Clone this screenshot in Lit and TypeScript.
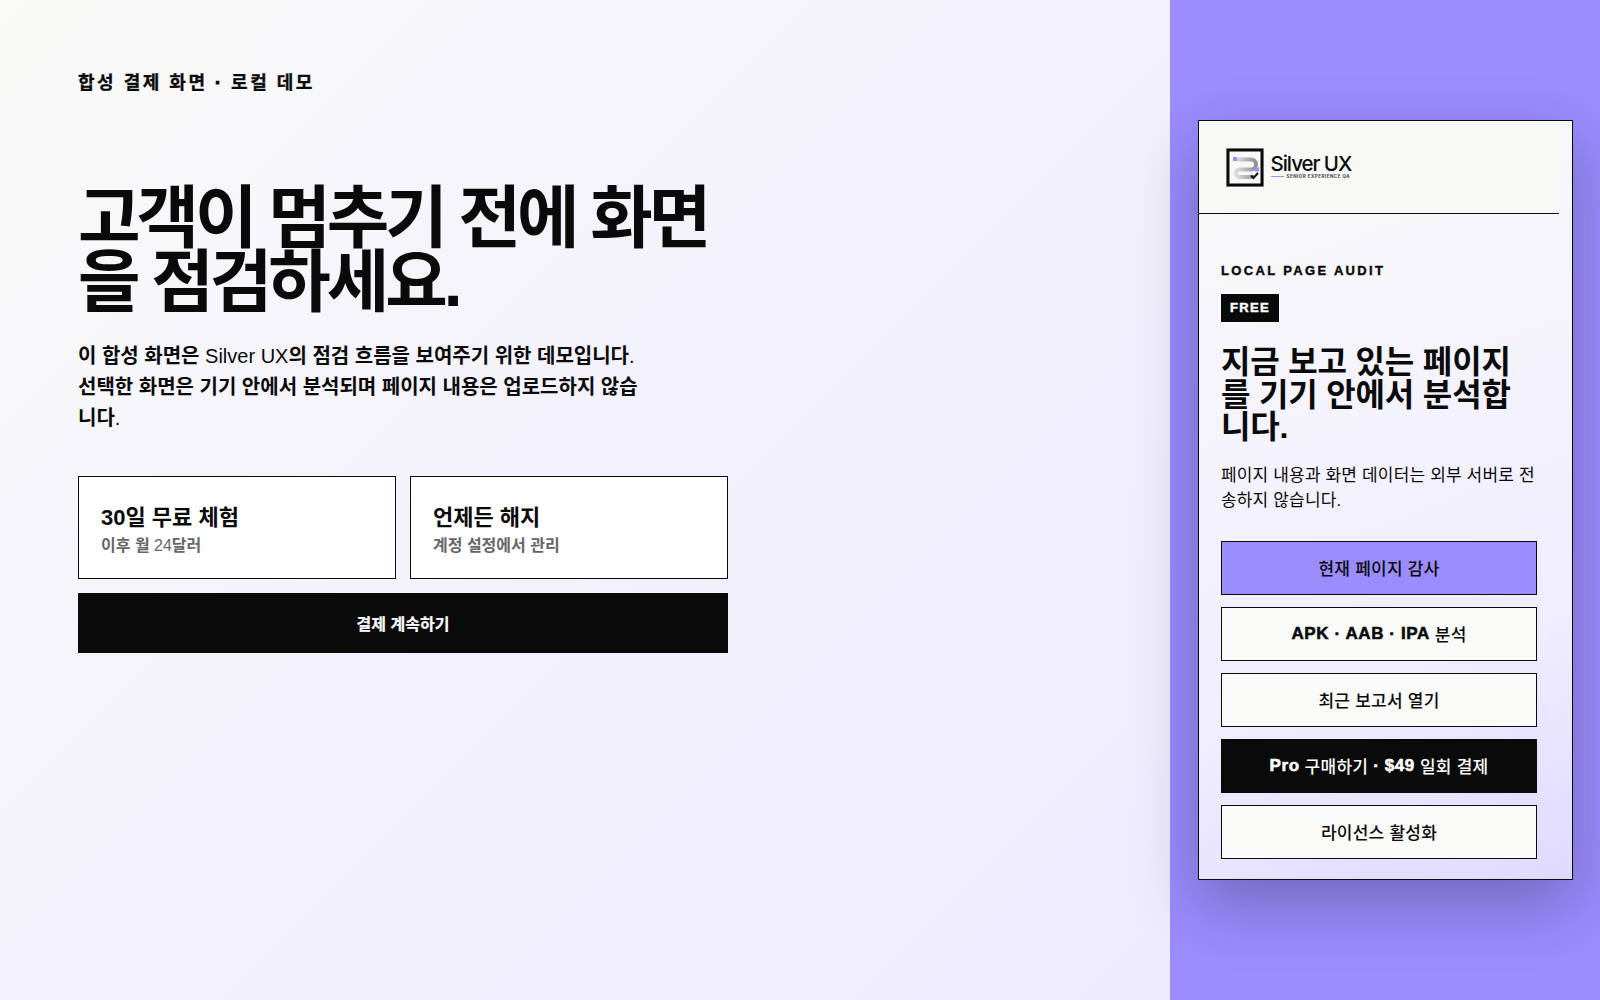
import { LitElement, html, css } from "lit";
import { customElement } from "lit/decorators.js";

@customElement("app-root")
export class AppRoot extends LitElement {
  static styles = css`
    :host { display: block; width: 1600px; height: 1000px; overflow: hidden; font-family: "Liberation Sans", "Noto Sans CJK KR", sans-serif; color: #0a0a0a; }
    * { box-sizing: border-box; }
    .page { display: grid; grid-template-columns: 1fr 430px; height: 1000px; }
    .left { padding: 71px 0 0 78px; background: linear-gradient(135deg, #fafaf8 0%, #f3f1fc 50%, #eeebff 100%); }
    .eyebrow { margin: 0; font-size: 18px; line-height: 24px; font-weight: 700; letter-spacing: 0.14em; -webkit-text-stroke: 0.3px #0a0a0a; }
    .eyebrow .dot { -webkit-text-stroke: 1px #0a0a0a; }
    h1 { margin: 91px 0 0; width: 650px; font-size: 68px; line-height: 64px; font-weight: 700; letter-spacing: -0.06em; }
    .lead { margin: 26.5px 0 0; width: 570px; font-size: 20px; line-height: 31px; font-weight: 700; }
    .lead .lat { font-weight: 400; }
    .cards { display: grid; grid-template-columns: 1fr 1fr; gap: 14px; width: 650px; margin-top: 42.5px; }
    .card { height: 103px; padding: 27px 22px; background: #fff; border: 1px solid #0a0a0a; }
    .card b { display: block; font-size: 22px; line-height: 28px; margin-bottom: 3px; }
    .card span { display: block; font-size: 16px; line-height: 22px; font-weight: 700; color: #666; }
    .card span .lat { display: inline; font-weight: 400; }
    .cta { display: flex; align-items: center; justify-content: center; width: 650px; height: 60px; margin-top: 14px; background: #0a0a0a; color: #fff; font-size: 16px; font-weight: 700; -webkit-text-stroke: 0.2px #fff; }
    .right { background: #9b8cff; padding: 120px 0 0 28px; }
    .panel { width: 375px; padding-right: 13px; border: 1px solid #0a0a0a; background: linear-gradient(160deg, #fafaf8 0%, #f0edff 70%, #e0d9ff 100%); box-shadow: 0 24px 60px rgba(10,10,10,.28); letter-spacing: 0.01em; }
    .head { display: flex; align-items: center; gap: 7px; height: 93px; padding: 0 0 0 26.5px; background: #f8f8f6; border-bottom: 1px solid #0a0a0a; font-family: Inter, "Liberation Sans", sans-serif; }
    .logo { display: block; flex: none; }
    .brand { display: flex; flex-direction: column; margin-top: -1px; }
    .name { font-size: 20.5px; line-height: 20px; font-weight: 500; letter-spacing: -0.05em; }
    .sub { display: flex; align-items: center; gap: 3px; font-size: 4.5px; line-height: 6px; font-weight: 700; letter-spacing: 0.11em; color: #444; }
    .sub i { display: block; width: 13px; height: 1.5px; background: #9b8cff; }
    .body { padding: 47px 22px 20px; }
    .kicker { margin: 0; font-size: 13px; line-height: 20px; font-weight: 700; letter-spacing: 0.18em; -webkit-text-stroke: 0.4px #0a0a0a; }
    .free { display: block; width: fit-content; margin-top: 13px; padding: 0 9px; height: 28px; line-height: 28px; background: #0a0a0a; color: #fff; font-size: 13px; font-weight: 700; letter-spacing: 0.1em; -webkit-text-stroke: 0.5px #fff; }
    h2 { margin: 24px 0 0; font-size: 32px; line-height: 32.64px; font-weight: 700; letter-spacing: -0.005em; }
    .desc { margin: 19px 0 0; font-size: 17px; line-height: 25.5px; }
    .actions { display: flex; flex-direction: column; gap: 12px; margin-top: 27px; }
    .btn { display: flex; align-items: center; justify-content: center; height: 54px; background: #fafaf8; border: 1px solid #0a0a0a; font-size: 17px; font-weight: 500; white-space: pre; letter-spacing: 0.015em; }
    .btn.primary { background: #9b8cff; }
    .btn.dark { background: #0a0a0a; color: #fff; }
    .btn .lat { font-weight: 700; letter-spacing: 0.035em; -webkit-text-stroke: 0.55px currentColor; }
  `;

  render() {
    return html`
      <div class="page">
        <section class="left">
          <p class="eyebrow">합성 결제 화면 <span class="dot">·</span> 로컬 데모</p>
          <h1>고객이 멈추기 전에 화면을 점검하세요.</h1>
          <p class="lead">이 합성 화면은 <span class="lat">Silver UX</span>의 점검 흐름을 보여주기 위한 데모입니다<span class="lat">.</span> 선택한 화면은 기기 안에서 분석되며 페이지 내용은 업로드하지 않습니다<span class="lat">.</span></p>
          <div class="cards">
            <div class="card"><b>30일 무료 체험</b><span>이후 월 <span class="lat">24</span>달러</span></div>
            <div class="card"><b>언제든 해지</b><span>계정 설정에서 관리</span></div>
          </div>
          <div class="cta">결제 계속하기</div>
        </section>
        <aside class="right">
          <div class="panel">
            <header class="head">
              <svg class="logo" width="38" height="39" viewBox="0 0 38 39" aria-hidden="true">
                <defs><linearGradient id="g" x1="0" x2="1"><stop offset="0" stop-color="#e0e0e2"/><stop offset="1" stop-color="#8f9096"/></linearGradient></defs>
                <rect x="0" y="0" width="38" height="39" fill="#d4d4d4"/>
                <rect x="2" y="2" width="34" height="35" fill="#f8f8f6" stroke="#0a0a0a" stroke-width="3"/>
                <path d="M9 11.5H25a5 5 0 0 1 0 10H13.5a3.75 3.75 0 0 0 0 7.5H28" fill="none" stroke="url(#g)" stroke-width="4"/>
                <rect x="7" y="9" width="4" height="4" fill="#9b8cff"/>
                <rect x="29" y="19.5" width="4" height="4" fill="#9b8cff"/>
                <path d="M25 27.5l2.5 2.5 4.5-5" fill="none" stroke="#0a0a0a" stroke-width="2"/>
              </svg>
              <div class="brand">
                <div class="name">Silver UX</div>
                <div class="sub"><i></i>SENIOR EXPERIENCE QA</div>
              </div>
            </header>
            <div class="body">
              <p class="kicker">LOCAL PAGE AUDIT</p>
              <span class="free">FREE</span>
              <h2>지금 보고 있는 페이지를 기기 안에서 분석합니다.</h2>
              <p class="desc">페이지 내용과 화면 데이터는 외부 서버로 전송하지 않습니다.</p>
              <div class="actions">
                <div class="btn primary">현재 페이지 감사</div>
                <div class="btn"><span class="lat">APK · AAB · IPA</span> 분석</div>
                <div class="btn">최근 보고서 열기</div>
                <div class="btn dark"><span class="lat">Pro</span> 구매하기 <span class="lat">· $49</span> 일회 결제</div>
                <div class="btn">라이선스 활성화</div>
              </div>
            </div>
          </div>
        </aside>
      </div>
    `;
  }
}
